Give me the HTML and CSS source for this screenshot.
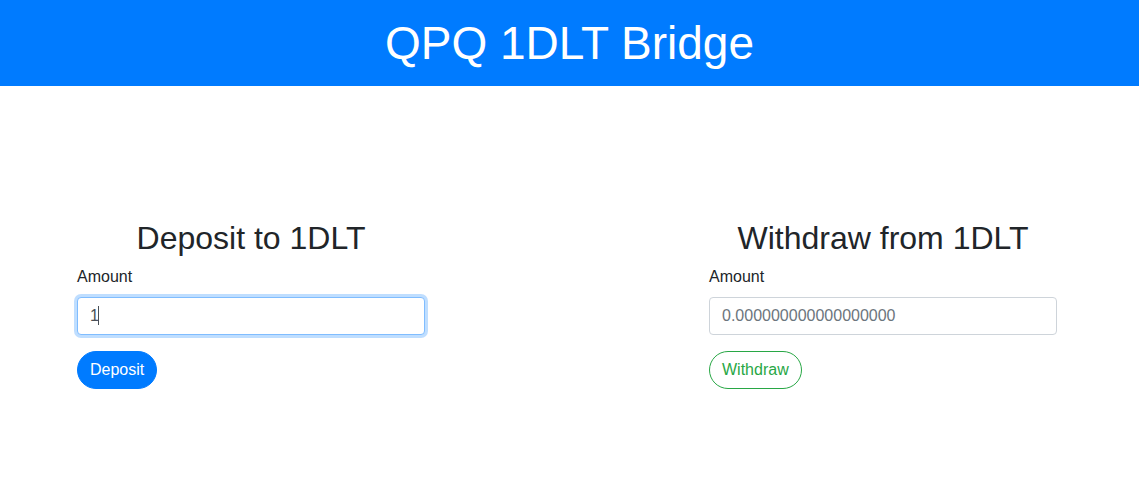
FILE: index.html
```html
<!DOCTYPE html>
<html lang="en">
<head>
    <meta charset="UTF-8">
    <meta name="viewport" content="width=device-width, initial-scale=1.0">
    <title>QPQ 1DLT Bridge</title>
    <link rel="stylesheet" href="styles.css">
</head>
<body>

<header class="topbar">
    <h1>QPQ 1DLT Bridge</h1>
</header>

<main class="bridge">
    <section class="panel">
        <h2>Deposit to 1DLT</h2>
        <div class="form-group">
            <label for="deposit-amount">Amount</label>
            <div class="input-wrap">
                <input type="text" id="deposit-amount" class="form-control focused" value="1">
                <span class="caret"></span>
            </div>
        </div>
        <button class="btn btn-primary">Deposit</button>
    </section>

    <section class="panel">
        <h2>Withdraw from 1DLT</h2>
        <div class="form-group">
            <label for="withdraw-amount">Amount</label>
            <input type="text" id="withdraw-amount" class="form-control" placeholder="0.000000000000000000">
        </div>
        <button class="btn btn-outline-success">Withdraw</button>
    </section>
</main>

</body>
</html>
```

FILE: styles.css
```css
body {
    font-family: "Liberation Sans", Arial, sans-serif;
    font-size: 16px;
    line-height: 1.5;
    color: #212529;
    background-color: #fff;
    margin: 0;
    padding: 0;
}

.topbar {
    background-color: #007bff;
    color: #fff;
    text-align: center;
    padding: 16px 0;
}

.topbar h1 {
    margin: 0;
    font-size: 46px;
    font-weight: normal;
    line-height: 54px;
}

.bridge {
    display: flex;
    gap: 284px;
    padding: 133px 0 0 77px;
}

.panel {
    width: 348px;
}

.panel h2 {
    text-align: center;
    font-size: 32px;
    font-weight: normal;
    line-height: 1.2;
    margin: 0 0 8px;
}

.form-group {
    margin-bottom: 16px;
}

label {
    display: inline-block;
    margin-bottom: 8px;
}

.input-wrap {
    position: relative;
}

.caret {
    position: absolute;
    left: 21px;
    top: 9px;
    width: 1px;
    height: 19px;
    background-color: #495057;
}

.form-control {
    display: block;
    box-sizing: border-box;
    width: 100%;
    height: 38px;
    padding: 6px 12px;
    font-family: inherit;
    font-size: 16px;
    line-height: 1.5;
    color: #495057;
    background-color: #fff;
    border: 1px solid #ced4da;
    border-radius: 4px;
    outline: 0;
}

.form-control::placeholder {
    color: #6c757d;
}

.form-control.focused,
.form-control:focus {
    border-color: #80bdff;
    box-shadow: 0 0 0 3px rgba(0, 123, 255, 0.25);
}

.btn {
    display: inline-block;
    font-family: inherit;
    font-size: 16px;
    line-height: 1.5;
    padding: 6px 12px;
    border: 1px solid transparent;
    border-radius: 50rem;
    cursor: pointer;
}

.btn-primary {
    background-color: #007bff;
    border-color: #007bff;
    color: #fff;
}

.btn-outline-success {
    background-color: transparent;
    border-color: #28a745;
    color: #28a745;
}
```
